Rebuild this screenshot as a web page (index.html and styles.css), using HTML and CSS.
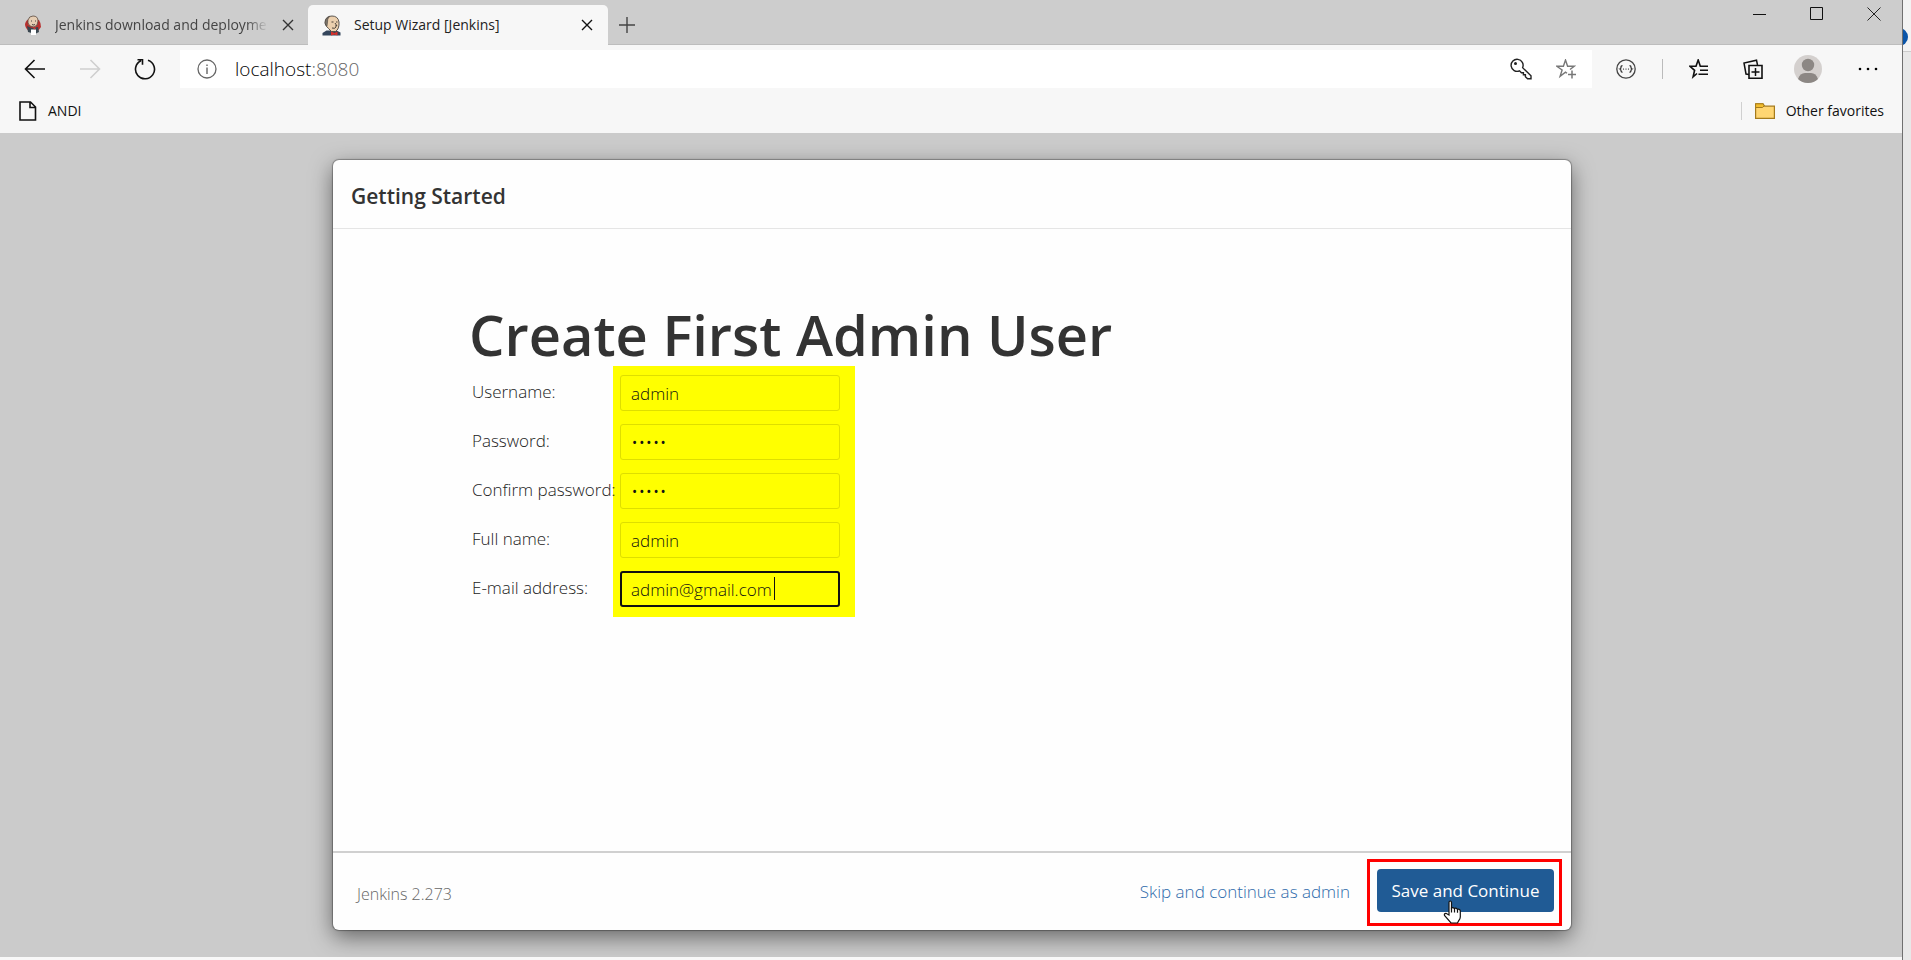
FILE: index.html
```html
<!DOCTYPE html>
<html lang="en">
<head>
<meta charset="utf-8">
<title>Setup Wizard [Jenkins]</title>
<link rel="stylesheet" href="styles.css">
</head>
<body>
<div class="desktop">
  <div class="window">
    <header class="tabstrip">
      <div class="tab tab-back">
        <svg class="favicon" width="18" height="21" viewBox="0 0 18 21" aria-hidden="true">
          <path d="M1 9Q2 5 5 4l10 1q2 3 2 7l-3 4H5Q1 13 1 9z" fill="#b8302f"/>
          <path d="M4 5Q5 1 9 1q5 0 5 5 0 5-4 6-5 0-6-4z" fill="#e6ceb4" stroke="#59493f" stroke-width=".8"/>
          <path d="M3 11l5 2 6-1 1 5-4 2-7-2z" fill="#39464f"/>
          <path d="M7 14.500h5V20H7z" fill="#fff"/>
          <path d="M8 12.500h4l-1 2z" fill="#d33833"/>
          <path d="M7 6h1M11 6h1M8 9.500q2 1 3 0" stroke="#333" fill="none" stroke-width=".9"/>
        </svg>
        <span class="tab-title">Jenkins download and deployme</span>
        <button class="tab-close" aria-label="Close tab"><svg width="12" height="12" viewBox="0 0 12 12"><path d="M1 1l10 10M11 1L1 11" stroke="#333" stroke-width="1.4"/></svg></button>
      </div>
      <div class="tab tab-active">
        <svg class="favicon" width="19" height="21" viewBox="0 0 19 21" aria-hidden="true">
          <path d="M.5 20.500V18l4-2.500h10l4 2v3z" fill="#35465c"/>
          <path d="M3 8Q3 1 10 1q6 0 7 6 .5 7-3.500 9.500Q9 18 6.500 13.500 3.500 11 3 8z" fill="#ecd0ae" stroke="#4b4540" stroke-width=".9"/>
          <path d="M3.500 10Q2 4 7.500 1.500 5 4 5.500 7l-.5 4z" fill="#7b756c" stroke="#4b4540" stroke-width=".6"/>
          <path d="M9.500 7h2M14 7h1.500M13 8l2 3h-2M10 13q3 1 4-1" stroke="#3a332e" stroke-width=".9" fill="none"/>
          <path d="M9 16.500l3.500 1.500 3-1.500v4l-3-1-3.500 1z" fill="#d6302a"/>
        </svg>
        <span class="tab-title">Setup Wizard [Jenkins]</span>
        <button class="tab-close" aria-label="Close tab"><svg width="12" height="12" viewBox="0 0 12 12"><path d="M1 1l10 10M11 1L1 11" stroke="#111" stroke-width="1.4"/></svg></button>
      </div>
      <button class="tab-new" aria-label="New tab"><svg width="18" height="18" viewBox="0 0 18 18"><path d="M9 1v16M1 9h16" stroke="#444" stroke-width="1.400"/></svg></button>
      <div class="window-controls">
        <button aria-label="Minimize"><svg width="14" height="14" viewBox="0 0 14 14"><path d="M0 7.500h13" stroke="#111"/></svg></button>
        <button aria-label="Maximize"><svg width="14" height="14" viewBox="0 0 14 14"><path d="M.5.5h12v12H.5z" stroke="#111" fill="none"/></svg></button>
        <button aria-label="Close"><svg width="14" height="14" viewBox="0 0 14 14"><path d="M.5.5l13 13M13.500.5l-13 13" stroke="#222"/></svg></button>
      </div>
    </header>

    <nav class="toolbar">
      <div class="nav-buttons">
        <button aria-label="Back"><svg width="22" height="20" viewBox="0 0 22 20"><path d="M21 10H2M10.500 1L1.500 10l9 9" fill="none" stroke="#111" stroke-width="1.600"/></svg></button>
        <button aria-label="Forward" disabled><svg width="22" height="20" viewBox="0 0 22 20"><path d="M1 10h19M11.500 1l9 9-9 9" fill="none" stroke="#cfcfcf" stroke-width="1.600"/></svg></button>
        <button aria-label="Refresh"><svg width="22" height="22" viewBox="0 0 22 22"><path d="M14 2.300A9.500 9.500 0 1 1 7 2.700M3.500 1.700h5v5" fill="none" stroke="#111" stroke-width="1.600"/></svg></button>
      </div>
      <div class="address">
        <svg width="20" height="20" viewBox="0 0 20 20" aria-hidden="true"><circle cx="10" cy="10" r="9" fill="none" stroke="#666" stroke-width="1.300"/><path d="M10 8.500V15M10 5.500v1.500" stroke="#666" stroke-width="1.400"/></svg>
        <a class="url" href="#">localhost<span>:8080</span></a>
        <button aria-label="Passwords"><svg width="22" height="22" viewBox="0 0 22 22"><path d="M12.600 9.700A6 6 0 1 0 9.500 12.800l1.900 1.900h2v2h2v2l2.200 2H21v-3z" fill="none" stroke="#222" stroke-width="1.400"/><circle cx="5.500" cy="5.500" r="1.500" fill="#222"/></svg></button>
        <button class="fav" aria-label="Add to favorites"><svg width="20" height="20" viewBox="0 0 20 20"><path d="M11 14.300l-1.500-1.100-5.400 4.100 2-6.300L.8 7.300h6.600L9.500 1l2.100 6.300h6.600L14 10.500" fill="none" stroke="#777" stroke-width="1.400"/><path d="M16 11.500v8M12 15.500h8" stroke="#777" stroke-width="1.500"/></svg></button>
      </div>
      <div class="tools">
        <button aria-label="JSON viewer"><svg width="20" height="20" viewBox="0 0 20 20"><circle cx="10" cy="10" r="9.200" fill="none" stroke="#444" stroke-width="1.300"/><path d="M6.500 6.700q-1.500 0-1.500 1.500t-1 1.800q1 .5 1 1.800t1.500 1.500M13.500 6.700q1.500 0 1.500 1.500t1 1.800q-1 .5-1 1.800t-1.500 1.500" fill="none" stroke="#333" stroke-width="1.300"/><circle cx="7.500" cy="10" r=".6"/><circle cx="10" cy="10" r=".6"/><circle cx="12.500" cy="10" r=".6"/></svg></button>
        <span class="divider"></span>
        <div class="tool-group">
          <button aria-label="Favorites"><svg width="20" height="20" viewBox="0 0 20 20"><path d="M8 14.500L4.100 17.800l1.500-6.500L1 7.300h6L9.200 1l2.100 6.300H19" fill="none" stroke="#111" stroke-width="1.600"/><path d="M11 11.300h8M9.500 15.300H19" stroke="#111" stroke-width="1.600"/></svg></button>
          <button aria-label="Collections"><svg width="20" height="20" viewBox="0 0 20 20"><path d="M6 6.500h13v12.700H6z" fill="none" stroke="#111" stroke-width="1.600"/><path d="M14.500 6l-1-4.800L1 4l2 11 3 .5M12.500 9v8M8.500 13h8" fill="none" stroke="#111" stroke-width="1.500"/></svg></button>
          <button class="avatar" aria-label="Profile"><svg width="28" height="28" viewBox="0 0 28 28"><circle cx="14" cy="14" r="14" fill="#d4d0ce"/><circle cx="14" cy="10" r="6.200" fill="#8c8784"/><path d="M4 24q2-6 7-6h6q5 0 7 6-4 4-10 4T4 24z" fill="#8c8784"/></svg></button>
          <button aria-label="Menu"><svg width="20" height="4" viewBox="0 0 20 4"><circle cx="2" cy="2" r="1.300"/><circle cx="10" cy="2" r="1.300"/><circle cx="18" cy="2" r="1.300"/></svg></button>
        </div>
      </div>
    </nav>

    <div class="bookmarks">
      <a href="#"><svg width="18" height="20" viewBox="0 0 18 20" aria-hidden="true"><path d="M1 1h10.500L16.500 6v13H1zM11 1v5.500h5.500" fill="none" stroke="#111" stroke-width="1.600"/></svg>ANDI</a>
      <a class="other" href="#"><svg width="20" height="16" viewBox="0 0 20 16" aria-hidden="true"><path d="M.6 15.400V.8h7.500l1.500 2.400h9.800v12.200z" fill="#ffd673" stroke="#a57b1c" stroke-width="1.200"/><path d="M.6.8h7.500l1 2-1.500 1.700H.6z" fill="#f2bd2d" stroke="#a57b1c"/></svg>Other favorites</a>
    </div>

    <main class="page">
      <section class="dialog">
        <h2 class="dialog-title">Getting Started</h2>
        <div class="dialog-body">
          <h1>Create First Admin User</h1>
          <form id="admin-form" class="form" onsubmit="return false">
            <div class="highlight"></div>
            <label for="username">Username:</label><input id="username" type="text" value="admin">
            <label for="password">Password:</label><input id="password" type="password" value="admin">
            <label for="confirm">Confirm password:</label><input id="confirm" type="password" value="admin">
            <label for="fullname">Full name:</label><input id="fullname" type="text" value="admin">
            <label for="email">E-mail address:</label>
            <div class="focus-field"><input id="email" type="text" value="admin@gmail.com"><span class="caret"></span></div>
          </form>
        </div>
        <footer class="dialog-footer">
          <span class="version">Jenkins 2.273</span>
          <a class="skip" href="#">Skip and continue as admin</a>
          <div class="callout">
            <button class="save" type="submit" form="admin-form">Save and Continue</button>
            <svg class="pointer" width="19" height="24" viewBox="0 0 19 24" aria-hidden="true"><path d="M6 15V2.500Q6 1 7.200 1T8.500 2.500V8q1.200-1.200 3 .5 1.500-.8 3 .8 2.500-.5 2.800 1.700V17q0 2-1.800 4L14.500 23H8L1.500 15.500Q.8 13.500 3 13.300z" fill="#fff" stroke="#111" stroke-width="1.200"/><path d="M8.500 7.500v5M11.500 8.500v4M14.500 9.300v3.500" stroke="#111" stroke-width="1.200"/></svg>
          </div>
        </footer>
      </section>
    </main>
  </div>
  <aside class="behind"><div class="behind-top"><span></span></div></aside>
</div>
</body>
</html>
```
FILE: styles.css
```css
* { box-sizing: border-box; }

body {
  margin: 0;
  font-family: "Open Sans", "Noto Sans", sans-serif;
  font-size: 17px;
  color: #333;
  background: #f8f8f8;
}

button {
  display: flex;
  align-items: center;
  justify-content: center;
  padding: 0;
  border: 0;
  background: none;
  font: inherit;
}

a { color: inherit; text-decoration: none; }
svg { display: block; flex: none; }

.desktop { display: flex; min-height: 100vh; }

.window {
  flex: 1;
  min-width: 0;
  display: flex;
  flex-direction: column;
  border-right: 1px solid #707070;
}

/* Tabs */
.tabstrip {
  display: flex;
  height: 45px;
  background: #cdcdcd;
  box-shadow: inset 0 -1px #bdbdbd;
}

.tab {
  display: flex;
  align-items: center;
  width: 300px;
  margin-top: 5px;
  padding: 0 13px 0 14px;
  font-size: 14px;
}

.tab-back { width: 308px; padding-left: 24px; padding-right: 12px; color: #444; }
.tab-active { background: #f7f7f7; border-radius: 5px 5px 0 0; color: #222; }
.favicon { margin-right: 13px; }

.tab-title {
  flex: 1;
  padding-bottom: 2px;
  white-space: nowrap;
}

.tab-back .tab-title { mask-image: linear-gradient(to right, #000 90%, transparent); }
.tab-close { width: 16px; height: 16px; margin-left: 12px; }
.tab-new { width: 38px; margin-top: 5px; }
.window-controls { display: flex; gap: 43px; height: 27px; margin-left: auto; padding-right: 21px; }

/* Toolbar */
.toolbar {
  display: flex;
  align-items: center;
  height: 48px;
  background: #f7f7f7;
}

.nav-buttons { display: flex; width: 180px; padding-left: 24px; gap: 33px; }

.address {
  flex: 1;
  display: flex;
  align-items: center;
  height: 38px;
  padding: 0 16px 0 17px;
  background: #fff;
}

.url { flex: 1; margin-left: 18px; font-size: 19px; font-weight: 300; color: #000; }
.url span { color: #666; }
.fav { margin-left: 24px; }

.tools { display: flex; align-items: center; width: 310px; padding: 0 24px; }
.divider { width: 1px; height: 20px; margin: 0 26px; background: #bbb; }
.tool-group { flex: 1; display: flex; align-items: center; justify-content: space-between; }
.avatar { margin: 0 2px 0 -4px; }

/* Bookmarks */
.bookmarks {
  display: flex;
  justify-content: space-between;
  align-items: center;
  height: 40px;
  padding: 0 18px 5px 19px;
  background: #f7f7f7;
  font-size: 14px;
  line-height: 18px;
  color: #111;
}

.bookmarks a { display: flex; align-items: center; gap: 11px; }
.bookmarks .other { padding-left: 13px; border-left: 1px solid #d0d0d0; }

/* Page and dialog */
.page {
  flex: 1;
  display: flex;
  margin-bottom: 3px;
  padding: 27px 331px 27px 333px;
  background: #cbcbcb;
  overflow: hidden;
}

.dialog {
  flex: 1;
  display: flex;
  flex-direction: column;
  border-radius: 6px;
  background: #fefefe;
  box-shadow: 0 0 1px 1px rgba(0, 0, 0, .3), 0 7px 22px rgba(0, 0, 0, .5);
}

.dialog-title {
  margin: 0;
  padding: 22px 18px 18px;
  border-bottom: 1px solid #e5e5e5;
  font-size: 21px;
  line-height: 28px;
  font-weight: 600;
}

.dialog-body { flex: 1; padding: 74px 136px 0; }

h1 {
  margin: 0;
  font-size: 56px;
  line-height: 63px;
  font-weight: 600;
  white-space: nowrap;
}

.form {
  display: grid;
  grid-template-columns: 141px 7px 220px 15px;
  grid-auto-rows: 36px;
  row-gap: 13px;
  padding: 9px 3px 10px;
}

.highlight {
  grid-column: 2 / 5;
  grid-row: 1 / 6;
  margin: -9px 0 -10px;
  background: #ff0;
}

.form label {
  grid-column: 1;
  line-height: 33px;
  font-weight: 300;
  white-space: nowrap;
  color: #222;
  z-index: 1;
}

.form input {
  width: 100%;
  height: 36px;
  padding: 0 10px;
  border: 1px solid #dede00;
  border-radius: 3px;
  background: transparent;
  font: inherit;
  font-weight: 300;
  color: #111;
}

.form input[type="password"] { font-size: 19px; }

.form > input, .focus-field { grid-column: 3; }
.form > *:nth-child(2), .form > *:nth-child(3) { grid-row: 1; }
.form > *:nth-child(4), .form > *:nth-child(5) { grid-row: 2; }
.form > *:nth-child(6), .form > *:nth-child(7) { grid-row: 3; }
.form > *:nth-child(8), .form > *:nth-child(9) { grid-row: 4; }
.form > *:nth-child(10), .form > *:nth-child(11) { grid-row: 5; }

.focus-field { position: relative; }
.form .focus-field input { border: 2px solid #111; padding: 0 9px; }

.caret {
  position: absolute;
  left: 154px;
  top: 6px;
  width: 1px;
  height: 23px;
  background: #111;
}

.dialog-footer {
  display: flex;
  align-items: flex-start;
  height: 79px;
  padding: 6px 9px 0 24px;
  border-top: 2px solid #d0d0d0;
}

.version { flex: 1; font-size: 16px; font-weight: 300; line-height: 70px; color: #666; }
.skip { margin-right: 17px; line-height: 65px; font-weight: 300; color: #2f6bab; }

.callout {
  position: relative;
  padding: 7px 5px 11px 7px;
  border: 3px solid #f00;
}

.save {
  width: 177px;
  height: 43px;
  border-radius: 4px;
  background: #205b95;
  color: #fff;
}

.pointer { position: absolute; left: 73px; top: 38px; }

/* Edge of the window underneath */
.behind { width: 8px; background: #e8e8e8; }
.behind-top { height: 52px; padding-top: 28px; background: #f3f3f3; border-bottom: 1px solid #ccc; overflow: hidden; }
.behind-top span { display: block; width: 18px; height: 18px; margin-left: -13px; border-radius: 9px; background: #0b55a8; }
```
